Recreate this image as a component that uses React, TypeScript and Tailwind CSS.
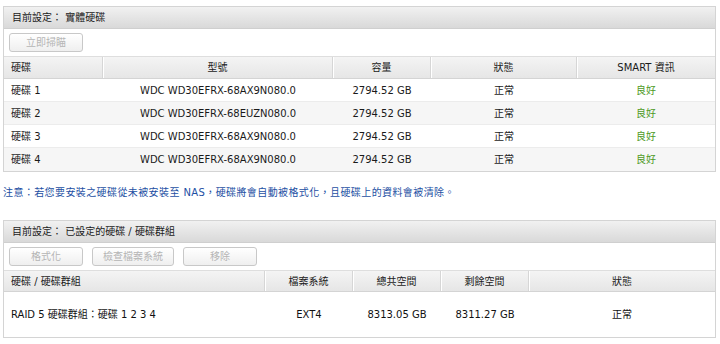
import React from "react";

const disks = [
	{ name: "硬碟 1", model: "WDC WD30EFRX-68AX9N080.0" },
	{ name: "硬碟 2", model: "WDC WD30EFRX-68EUZN080.0" },
	{ name: "硬碟 3", model: "WDC WD30EFRX-68AX9N080.0" },
	{ name: "硬碟 4", model: "WDC WD30EFRX-68AX9N080.0" },
];

const font = "font-['DejaVu_Sans','Noto_Sans_CJK_TC',sans-serif]";

const TitleBar: React.FC<{ text: string }> = ({ text }) => (
	<div className="h-[22px] flex items-center px-[8px] bg-gradient-to-b from-[#f1f1f1] to-[#d9d9d9] border-b border-[#cfcfcf] text-[10px] text-[#1a1a1a]">
		{text}
	</div>
);

const Btn: React.FC<{ label: string; w: string }> = ({ label, w }) => (
	<div
		className={`${w} h-[19px] flex items-center justify-center rounded-[3px] border border-[#c8c8c8] bg-gradient-to-b from-white to-[#efefef] text-[10px] text-[#b5b5b5]`}
	>
		{label}
	</div>
);

const HeadCell: React.FC<{ w: string; left?: boolean; last?: boolean; children: React.ReactNode }> = ({
	w,
	left,
	last,
	children,
}) => (
	<div
		className={`${w} h-full flex items-center ${left ? "pl-[7px]" : "justify-center"} ${
			last ? "" : "border-r border-[#d6d6d6] shadow-[1px_0_0_#ffffff]"
		}`}
	>
		{children}
	</div>
);

export default function App() {
	return (
		<div className={`w-[720px] h-[344px] bg-white pt-[6px] pl-[3px] pr-[4px] ${font}`}>
			{/* physical disks */}
			<div className="border border-[#d4d4d4]">
				<TitleBar text="目前設定： 實體硬碟" />
				<div className="h-[28px] flex items-center px-[5px] border-b border-[#dedede]">
					<Btn label="立即掃瞄" w="w-[74px]" />
				</div>
				<div className="h-[22px] flex bg-gradient-to-b from-[#f4f4f4] to-[#e6e6e6] border-b border-[#d4d4d4] text-[10px] text-[#1a1a1a]">
					<HeadCell w="w-[99px]" left>硬碟</HeadCell>
					<HeadCell w="w-[230px]">型號</HeadCell>
					<HeadCell w="w-[98px]">容量</HeadCell>
					<HeadCell w="w-[146px]">狀態</HeadCell>
					<HeadCell w="flex-1" last>SMART 資訊</HeadCell>
				</div>
				{disks.map((d, i) => (
					<div
						key={d.name}
						className={`h-[23px] flex items-center text-[10px] text-[#1a1a1a] ${
							i % 2 === 1 ? "bg-[#f6f6f6]" : "bg-white"
						} ${i < 3 ? "border-b border-[#ececec]" : ""}`}
					>
						<div className="w-[99px] pl-[7px]">{d.name}</div>
						<div className="w-[230px] text-center">{d.model}</div>
						<div className="w-[98px] text-center">2794.52 GB</div>
						<div className="w-[146px] text-center">正常</div>
						<div className="flex-1 text-center text-[#4e9a1e]">良好</div>
					</div>
				))}
			</div>

			<div className="mt-[14px] text-[10px] leading-[14px] tracking-[0.4px] text-[#1d4fa3]">
				注意：若您要安裝之硬碟從未被安裝至 NAS，硬碟將會自動被格式化，且硬碟上的資料會被清除。
			</div>

			{/* configured disks / groups */}
			<div className="mt-[20px] border border-[#d4d4d4]">
				<TitleBar text="目前設定： 已設定的硬碟 / 硬碟群組" />
				<div className="h-[28px] flex items-center gap-[9px] px-[5px] border-b border-[#dedede]">
					<Btn label="格式化" w="w-[74px]" />
					<Btn label="檢查檔案系統" w="w-[82px]" />
					<Btn label="移除" w="w-[74px]" />
				</div>
				<div className="h-[21px] flex bg-gradient-to-b from-[#f4f4f4] to-[#e6e6e6] border-b border-[#d4d4d4] text-[10px] text-[#1a1a1a]">
					<HeadCell w="w-[261px]" left>硬碟 / 硬碟群組</HeadCell>
					<HeadCell w="w-[88px]">檔案系統</HeadCell>
					<HeadCell w="w-[88px]">總共空間</HeadCell>
					<HeadCell w="w-[88px]">剩餘空間</HeadCell>
					<HeadCell w="flex-1" last>狀態</HeadCell>
				</div>
				<div className="h-[45px] flex items-center text-[10px] text-[#111]">
					<div className="w-[261px] pl-[7px]">RAID 5 硬碟群組：硬碟 1 2 3 4</div>
					<div className="w-[88px] text-center">EXT4</div>
					<div className="w-[88px] text-center">8313.05 GB</div>
					<div className="w-[88px] text-center">8311.27 GB</div>
					<div className="flex-1 text-center">正常</div>
				</div>
			</div>
		</div>
	);
}
